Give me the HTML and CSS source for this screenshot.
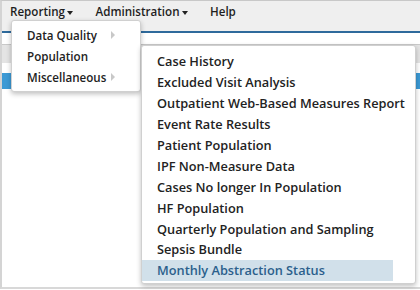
FILE: index.html
```html
<!DOCTYPE html>
<html lang="en">
<head>
  <meta charset="UTF-8">
  <title>Reporting</title>
  <link rel="stylesheet" href="styles.css">
</head>
<body>
  <div class="page">
    <nav class="navbar">
      <div class="nav-item">Reporting<span class="caret"></span></div>
      <div class="nav-item">Administration<span class="caret"></span></div>
      <div class="nav-item">Help</div>
    </nav>

    <div class="content">
      <div class="grid-head"></div>
      <div class="grid-row selected"></div>
    </div>

    <!-- Reporting menu -->
    <ul class="menu main-menu">
      <li>Data Quality <span class="sub-arrow"></span></li>
      <li>Population</li>
      <li>Miscellaneous <span class="sub-arrow"></span></li>
    </ul>

    <!-- Miscellaneous submenu -->
    <ul class="menu sub-menu">
      <li>Case History</li>
      <li>Excluded Visit Analysis</li>
      <li>Outpatient Web-Based Measures Report</li>
      <li>Event Rate Results</li>
      <li>Patient Population</li>
      <li>IPF Non-Measure Data</li>
      <li>Cases No longer In Population</li>
      <li>HF Population</li>
      <li>Quarterly Population and Sampling</li>
      <li>Sepsis Bundle</li>
      <li class="active">Monthly Abstraction Status</li>
    </ul>
  </div>
</body>
</html>
```

FILE: styles.css
```css
* {
  margin: 0;
  padding: 0;
  box-sizing: border-box;
  font-family: 'Open Sans', sans-serif;
}

body {
  background: #fff;
  color: #222;
  width: 420px;
  height: 290px;
  overflow: hidden;
}

.page {
  position: relative;
  width: 420px;
  height: 289px;
  border-left: 2px solid #d4d4d4;
  border-bottom: 2px solid #d8d8d8;
  border-top: 1px solid #c8c8c8;
}

.navbar {
  display: flex;
  height: 32px;
  background: #efefef;
  border-bottom: 2px solid #2e6a9c;
  padding-left: 8px;
}

.nav-item {
  font-size: 11.6px;
  font-weight: 600;
  color: #1e1e1e;
  padding-top: 3px;
  margin-right: 22.5px;
}

.caret {
  display: inline-block;
  margin-left: 2px;
  vertical-align: middle;
  border-top: 4px solid #222;
  border-left: 3px solid transparent;
  border-right: 3px solid transparent;
}

.content {
  padding-top: 11px;
}

.grid-head {
  height: 19px;
  background: #e4e4e4;
  border-top: 1px solid #c9c9c9;
}

.grid-row {
  height: 16px;
  margin-top: 10px;
}

.grid-row.selected {
  background: #3c9ad5;
}

.menu {
  position: absolute;
  list-style: none;
  background: #fff;
  border: 1px solid #d0d0d0;
  border-radius: 3px;
  box-shadow: 0 2px 5px rgba(0,0,0,0.25);
}

.menu li {
  display: flex;
  align-items: center;
  font-size: 12.75px;
  font-weight: 600;
  color: #222;
  height: 20.9px;
  padding-left: 15px;
  white-space: nowrap;
}

.main-menu {
  left: 9px;
  top: 19px;
  width: 130px;
  padding: 4px 0 3px;
}

.main-menu li {
  font-size: 11.6px;
}

.sub-arrow {
  margin-left: auto;
  margin-right: 25px;
  border-left: 4px solid #c8c8c8;
  border-top: 4px solid transparent;
  border-bottom: 4px solid transparent;
}

.sub-menu {
  left: 139px;
  top: 44px;
  width: 275px;
  padding: 5px 0 2px;
}

.menu li.active {
  background: #d1e0ea;
  color: #2b5f8c;
  margin-right: 22px;
}
```
